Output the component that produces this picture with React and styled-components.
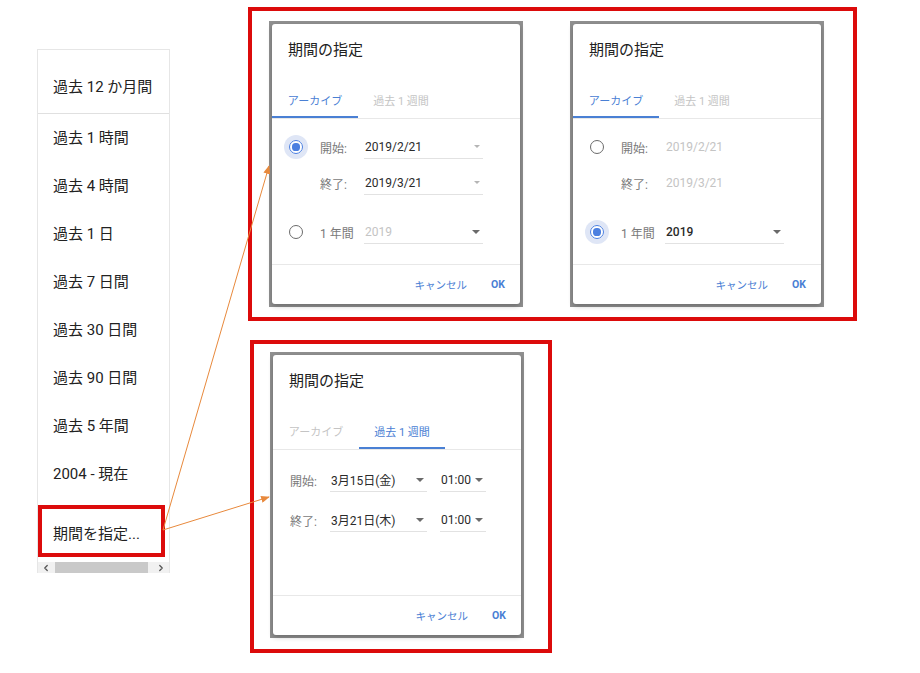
import styled, { createGlobalStyle } from "styled-components";
import { ChevronLeft, ChevronRight } from "lucide-react";

const GlobalStyle = createGlobalStyle`
  html, body { margin: 0; background: #fff; }
  body { font-family: Roboto, "Noto Sans CJK JP", sans-serif; }
  * { box-sizing: border-box; }
`;

const Page = styled.div`
  position: relative;
  display: flex;
  align-items: flex-start;
  width: 920px;
  height: 673px;
  overflow: hidden;
`;

/* ---------- left menu ---------- */
const Menu = styled.div`
  margin: 49px 0 0 37px;
  width: 133px;
  background: #fff;
  border: 1px solid #e6e6e6;
  border-bottom: none;
`;
const MenuItem = styled.div`
  height: ${(p) => (p.$tall ? 64 : 48)}px;
  padding: ${(p) => (p.$tall ? "7px 0 0 15px" : "0 0 3px 15px")};
  display: flex;
  align-items: center;
  font-size: 15px;
  color: #222;
  white-space: nowrap;
  border-bottom: ${(p) => (p.$divider ? "1px solid #e0e0e0" : "none")};
`;
const CustomItem = styled.div`
  height: 64px;
  padding: 7px 0 5px 0;
`;
const Highlight = styled.div`
  width: 127px;
  height: 52px;
  border: 4px solid #dc0b0b;
  display: flex;
  align-items: center;
  padding: 3px 0 0 11px;
  font-size: 15px;
  color: #222;
  white-space: nowrap;
`;
const Scrollbar = styled.div`
  display: flex;
  align-items: stretch;
  height: 11px;
  background: #f1f1f1;
`;
const ScrollArrow = styled.div`
  width: 17px;
  display: flex;
  align-items: center;
  justify-content: center;
  color: #555;
`;
const Thumb = styled.div`
  width: 94px;
  background: #c9c9c9;
  margin-right: 4px;
`;

/* ---------- annotation frames ---------- */
const Annotations = styled.div`
  margin-left: 78px;
  padding-top: 7px;
  display: flex;
  flex-direction: column;
  align-items: flex-start;
`;
const RedFrame = styled.div`
  border: 4px solid #dc0b0b;
  width: ${(p) => p.$w}px;
  height: ${(p) => p.$h}px;
  margin: ${(p) => p.$margin || "0"};
  padding: ${(p) => p.$pad};
  display: flex;
  align-items: flex-start;
  gap: 47px;
`;

/* ---------- dialog ---------- */
const Backdrop = styled.div`
  width: 254px;
  height: 286px;
  padding: 3px;
  background: #909090;
`;
const Card = styled.div`
  height: 100%;
  background: #fff;
  border-radius: 3px;
  display: flex;
  flex-direction: column;
  box-shadow: 0 2px 5px rgba(0, 0, 0, 0.25);
`;
const Title = styled.div`
  height: 52px;
  line-height: 52px;
  padding-left: 16px;
  font-size: 15px;
  color: #212121;
`;
const Tabs = styled.div`
  margin-top: 6px;
  height: 37px;
  display: flex;
  border-bottom: 1px solid #e8e8e8;
`;
const Tab = styled.div`
  width: 86px;
  display: flex;
  align-items: center;
  justify-content: center;
  font-size: 11px;
  color: ${(p) => (p.$active ? "#4a80d4" : "#c4c4c4")};
  box-shadow: ${(p) => (p.$active ? "inset 0 -2px 0 #4a80d4" : "none")};
`;
const Body = styled.div`
  flex: 1;
  padding: 10px 0 0 ${(p) => p.$indent || 0}px;
`;
const Row = styled.div`
  height: ${(p) => p.$h}px;
  margin-top: ${(p) => p.$gap || 0}px;
  display: flex;
  align-items: center;
`;
const RadioSlot = styled.div`
  width: 48px;
  display: flex;
  justify-content: center;
`;
const Radio = styled.span`
  position: relative;
  width: 14px;
  height: 14px;
  border-radius: 50%;
  border: 1.6px solid ${(p) => (p.$checked ? "#4b7fe0" : "#6b6b6b")};
  box-shadow: ${(p) => (p.$checked ? "0 0 0 5px #dfe6f6" : "none")};
  &::after {
    content: "";
    position: absolute;
    inset: 2.4px;
    border-radius: 50%;
    background: #4b7fe0;
    display: ${(p) => (p.$checked ? "block" : "none")};
  }
`;
const Label = styled.div`
  width: ${(p) => p.$w}px;
  font-size: 12px;
  color: #7a7a7a;
  white-space: nowrap;
`;
const Select = styled.div`
  width: ${(p) => p.$w}px;
  height: 23px;
  margin-right: ${(p) => p.$after || 0}px;
  display: flex;
  align-items: center;
  justify-content: space-between;
  padding: 0 3px 0 1px;
  border-bottom: 1px solid ${(p) => (p.$plain ? "transparent" : "#e2e2e2")};
  font-size: 12px;
  font-weight: ${(p) => (p.$strong ? 500 : 400)};
  color: ${(p) => (p.$muted ? "#c4c4c4" : "#2a2a2a")};
  white-space: nowrap;
`;
const Caret = styled.span`
  width: 0;
  height: 0;
  border-left: ${(p) => p.$s}px solid transparent;
  border-right: ${(p) => p.$s}px solid transparent;
  border-top: ${(p) => p.$s * 1.1}px solid ${(p) => p.$c};
`;
const Footer = styled.div`
  height: 40px;
  border-top: 1px solid #e8e8e8;
  display: flex;
  justify-content: flex-end;
  align-items: center;
  gap: 24px;
  padding-right: 15px;
  font-size: 10.5px;
  color: #4a80d4;
`;
const Ok = styled.span`
  font-weight: 700;
`;

const Overlay = styled.svg`
  position: absolute;
  left: 0;
  top: 0;
  pointer-events: none;
`;

const menuItems = [
  "過去 1 時間",
  "過去 4 時間",
  "過去 1 日",
  "過去 7 日間",
  "過去 30 日間",
  "過去 90 日間",
  "過去 5 年間",
  "2004 - 現在",
];

const small = <Caret $s={3.5} $c="#b5b5b5" />;
const big = <Caret $s={4.5} $c="#6a6a6a" />;

const Dialog = ({ tab, children }) => (
  <Backdrop>
    <Card>
      <Title>期間の指定</Title>
      <Tabs>
        <Tab $active={tab === 0}>アーカイブ</Tab>
        <Tab $active={tab === 1}>過去 1 週間</Tab>
      </Tabs>
      {children}
      <Footer>
        <span>キャンセル</span>
        <Ok>OK</Ok>
      </Footer>
    </Card>
  </Backdrop>
);

const ArchiveBody = ({ yearMode }) => (
  <Body>
    <Row $h={36}>
      <RadioSlot>
        <Radio $checked={!yearMode} />
      </RadioSlot>
      <Label $w={44}>開始:</Label>
      <Select $w={119} $muted={yearMode} $plain={yearMode}>
        2019/2/21{!yearMode && small}
      </Select>
    </Row>
    <Row $h={36}>
      <RadioSlot />
      <Label $w={44}>終了:</Label>
      <Select $w={119} $muted={yearMode} $plain={yearMode}>
        2019/3/21{!yearMode && small}
      </Select>
    </Row>
    <Row $h={36} $gap={13}>
      <RadioSlot>
        <Radio $checked={yearMode} />
      </RadioSlot>
      <Label $w={44}>1 年間</Label>
      <Select $w={119} $muted={!yearMode} $strong={yearMode}>
        2019{big}
      </Select>
    </Row>
  </Body>
);

const WeekBody = () => (
  <Body $indent={17}>
    {[
      ["開始:", "3月15日(金)"],
      ["終了:", "3月21日(木)"],
    ].map(([label, date]) => (
      <Row $h={40} key={label}>
        <Label $w={40}>{label}</Label>
        <Select $w={97} $after={13}>
          {date}
          {big}
        </Select>
        <Select $w={46}>
          01:00
          {big}
        </Select>
      </Row>
    ))}
  </Body>
);

const App = () => (
  <Page>
    <GlobalStyle />
    <Menu>
      <MenuItem $tall $divider>
        過去 12 か月間
      </MenuItem>
      {menuItems.map((item) => (
        <MenuItem key={item}>{item}</MenuItem>
      ))}
      <CustomItem>
        <Highlight>期間を指定...</Highlight>
      </CustomItem>
      <Scrollbar>
        <ScrollArrow>
          <ChevronLeft size={10} strokeWidth={3} />
        </ScrollArrow>
        <Thumb />
        <ScrollArrow>
          <ChevronRight size={10} strokeWidth={3} />
        </ScrollArrow>
      </Scrollbar>
    </Menu>

    <Annotations>
      <RedFrame $w={609} $h={314} $pad="10px 0 0 17px">
        <Dialog tab={0}>
          <ArchiveBody yearMode={false} />
        </Dialog>
        <Dialog tab={0}>
          <ArchiveBody yearMode />
        </Dialog>
      </RedFrame>
      <RedFrame $w={302} $h={313} $margin="19px 0 0 2px" $pad="8px 0 0 16px">
        <Dialog tab={1}>
          <WeekBody />
        </Dialog>
      </RedFrame>
    </Annotations>

    <Overlay width="920" height="673" viewBox="0 0 920 673">
      <defs>
        <marker
          id="head"
          viewBox="0 0 10 8"
          refX="9"
          refY="4"
          markerWidth="9"
          markerHeight="7"
          markerUnits="userSpaceOnUse"
          orient="auto"
        >
          <path d="M0 0 L10 4 L0 8 Z" fill="#e8893c" />
        </marker>
      </defs>
      <line x1="163" y1="530" x2="269" y2="166" stroke="#e8893c" strokeWidth="1" markerEnd="url(#head)" />
      <line x1="163" y1="530" x2="269" y2="497" stroke="#e8893c" strokeWidth="1" markerEnd="url(#head)" />
    </Overlay>
  </Page>
);

export default App;
